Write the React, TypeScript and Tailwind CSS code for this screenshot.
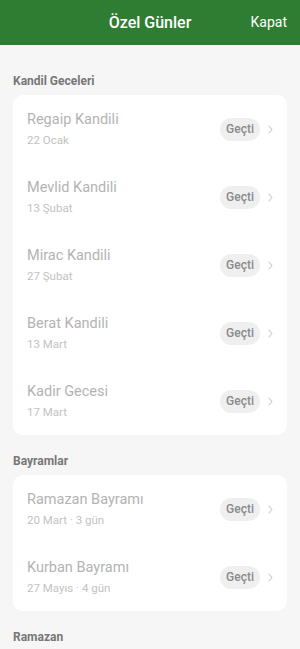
import React from "react";

type Item = { title: string; date: string };

const sections: { name: string; items: Item[] }[] = [
  {
    name: "Kandil Geceleri",
    items: [
      { title: "Regaip Kandili", date: "22 Ocak" },
      { title: "Mevlid Kandili", date: "13 Şubat" },
      { title: "Mirac Kandili", date: "27 Şubat" },
      { title: "Berat Kandili", date: "13 Mart" },
      { title: "Kadir Gecesi", date: "17 Mart" },
    ],
  },
  {
    name: "Bayramlar",
    items: [
      { title: "Ramazan Bayramı", date: "20 Mart · 3 gün" },
      { title: "Kurban Bayramı", date: "27 Mayıs · 4 gün" },
    ],
  },
  {
    name: "Ramazan",
    items: [],
  },
];

function Row({ item }: { item: Item }) {
  return (
    <div className="flex h-[68px] items-center pl-[14px] pr-[14px]">
      <div className="flex flex-1 flex-col pb-[1px]">
        <span className="text-[14.5px] leading-[20px] text-[#b3b3b3]">{item.title}</span>
        <span className="mt-[2px] text-[11.5px] leading-[16px] text-[#c2c2c2]">{item.date}</span>
      </div>
      <span className="flex h-[23px] items-center rounded-full bg-[#efefef] px-[6px] text-[12px] font-medium text-[#8a8a8a]">
        Geçti
      </span>
      <svg className="ml-[8px]" width="5" height="9" viewBox="0 0 5 9" fill="none">
        <path d="M1 1L4 4.5L1 8" stroke="#c8c8c8" strokeWidth="1.1" strokeLinecap="round" strokeLinejoin="round" />
      </svg>
    </div>
  );
}

export default function App() {
  return (
    <div className="min-h-[649px] w-[300px] bg-[#f6f6f6] font-['Roboto',sans-serif]">
      <div className="relative flex h-[45px] items-center justify-center bg-[#2e7d32]">
        <span className="text-[16px] font-medium text-white">Özel Günler</span>
        <span className="absolute right-[13px] text-[14px] text-white">Kapat</span>
      </div>
      <div className="flex flex-col gap-[18px] pt-[28px]">
        {sections.map((s) => (
          <div key={s.name} className="flex flex-col">
            <div className="px-[13px] text-[12px] font-bold leading-[16px] text-[#777]">{s.name}</div>
            {s.items.length > 0 && (
              <div className="mx-[13px] mt-[6px] overflow-hidden rounded-[10px] bg-white">
                {s.items.map((it) => (
                  <Row key={it.title} item={it} />
                ))}
              </div>
            )}
          </div>
        ))}
      </div>
    </div>
  );
}
